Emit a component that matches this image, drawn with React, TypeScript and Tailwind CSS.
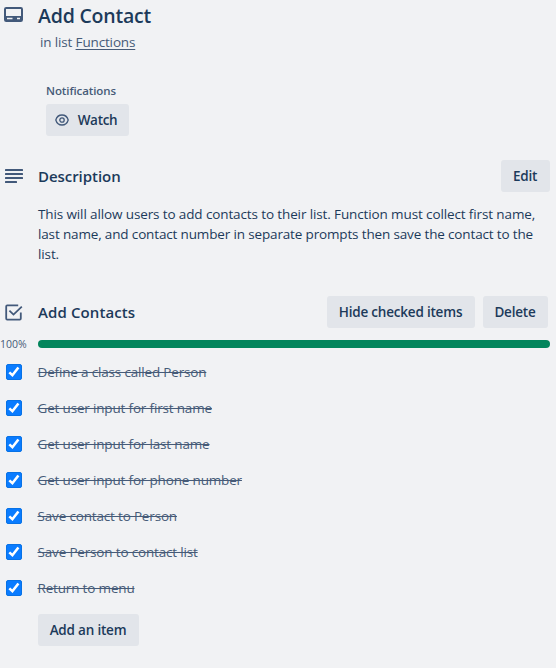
import React from 'react';

const items = [
  'Define a class called Person',
  'Get user input for first name',
  'Get user input for last name',
  'Get user input for phone number',
  'Save contact to Person',
  'Save Person to contact list',
  'Return to menu',
];

function Button({ className, children }: { className: string; children: React.ReactNode }) {
  return (
    <button
      className={`flex h-8 shrink-0 items-center justify-center whitespace-nowrap rounded-[3px] bg-[#e2e5ea] text-[13.5px] font-semibold leading-5 text-[#1c3a5a] ${className}`}
    >
      {children}
    </button>
  );
}

function CardIcon() {
  return (
    <svg className="ml-1 mt-[7px] h-4 w-[19px] shrink-0" viewBox="0 0 19 16" fill="none">
      <rect x="1" y="1" width="17" height="13" rx="1.2" stroke="#42597a" strokeWidth="2" />
      <path d="M1 9h17v4a1 1 0 0 1-1 1H2a1 1 0 0 1-1-1z" fill="#42597a" />
      <path d="M3 11.5h5.5M13 11.5h3" stroke="#f1f2f4" strokeWidth="1.5" />
    </svg>
  );
}

function DescriptionIcon() {
  return (
    <svg className="ml-[5px] h-[14px] w-[18px] shrink-0" viewBox="0 0 18 14" fill="#42597a">
      <rect width="18" height="2" rx=".5" />
      <rect y="4" width="18" height="2" rx=".5" />
      <rect y="8" width="18" height="2" rx=".5" />
      <rect y="12" width="12" height="2" rx=".5" />
    </svg>
  );
}

function ChecklistIcon() {
  return (
    <svg className="ml-[5px] h-[17px] w-[18px] shrink-0" viewBox="0 0 18 17" fill="none" stroke="#42597a" strokeWidth="1.8">
      <path d="M13.2 1.4H2.2a1 1 0 0 0-1 1v12.2a1 1 0 0 0 1 1h12.6a1 1 0 0 0 1-1V8.6" />
      <path d="M4.4 6.6 8.5 10.6 16.8 2.6" />
    </svg>
  );
}

function EyeIcon() {
  return (
    <svg className="mr-[9px] h-3 w-[14px]" viewBox="0 0 14 12" fill="none" stroke="#42597a" strokeWidth="1.3">
      <path d="M.8 6C1.8 2.6 4.3 1 7 1s5.2 1.6 6.2 5c-1 3.4-3.5 5-6.2 5S1.8 9.4.8 6z" />
      <circle cx="7" cy="6" r="2.2" />
    </svg>
  );
}

function Checkbox() {
  return (
    <span className="ml-1.5 flex h-4 w-4 shrink-0 rounded-[2px] border border-[#0872e6] bg-[#0a7cff]">
      <svg className="h-[14px] w-[14px]" viewBox="0 0 14 14" fill="none" stroke="white" strokeWidth="2.6">
        <path d="M2.3 7.4 5.4 10.2 11.4 2.5" />
      </svg>
    </span>
  );
}

export default function App() {
  return (
    <main className="h-[668px] w-[556px] overflow-hidden bg-[#f1f2f4] font-['Open_Sans','Noto_Sans',sans-serif] text-[13.5px] leading-5 text-[#1c3a5a]">
      <header className="flex h-[80px]">
        <CardIcon />
        <div className="ml-[15px] pt-1">
          <h1 className="text-[19.5px] font-semibold leading-6 tracking-[-0.2px]">Add Contact</h1>
          <p className="ml-0.5 mt-1 tracking-[-0.15px] text-[#465b78]">
            in list <a className="underline underline-offset-2">Functions</a>
          </p>
        </div>
      </header>
      <section className="ml-[46px] h-20">
        <h2 className="h-6 pt-[3px] text-[11.5px] font-semibold leading-4 tracking-[-0.1px] text-[#465b78]">Notifications</h2>
        <Button className="w-[83px] pr-[3px] tracking-[-0.3px]">
          <EyeIcon />
          Watch
        </Button>
      </section>
      <section>
        <div className="flex h-8 items-center pr-1.5">
          <DescriptionIcon />
          <h2 className="ml-[15px] flex-1 text-[15px] font-semibold tracking-[-0.05px]">Description</h2>
          <Button className="w-[49px] pr-px tracking-[-0.2px]">Edit</Button>
        </div>
        <p className="ml-[38px] mt-3 whitespace-nowrap tracking-[-0.12px]">
          This will allow users to add contacts to their list. Function must collect first name,
          <br />
          <span className="tracking-[-0.15px]">last name, and contact number in separate prompts then save the contact to the</span>
          <br />
          list.
        </p>
      </section>
      <section className="mt-8">
        <div className="flex h-8 items-center pr-2">
          <ChecklistIcon />
          <h2 className="ml-[15px] flex-1 text-[15px] font-semibold tracking-[0.1px]">Add Contacts</h2>
          <Button className="mr-2 w-[148px] pr-px tracking-[-0.2px]">Hide checked items</Button>
          <Button className="w-[65px] pr-px tracking-[-0.2px]">Delete</Button>
        </div>
        <div className="flex h-[26px] items-center pt-[6px]">
          <span className="w-[38px] text-[10.5px] leading-4 text-[#465b78]">100%</span>
          <div className="h-2 w-[512px] rounded-full bg-[#03855c]" />
        </div>
        <ul>
          {items.map((item) => (
            <li key={item} className="flex h-9 items-center">
              <Checkbox />
              <span className="ml-[15.5px] whitespace-nowrap tracking-[-0.17px] text-[#465b78] line-through">{item}</span>
            </li>
          ))}
        </ul>
        <Button className="ml-[38px] mt-2 w-[101px] pr-px tracking-[-0.2px]">Add an item</Button>
      </section>
    </main>
  );
}
